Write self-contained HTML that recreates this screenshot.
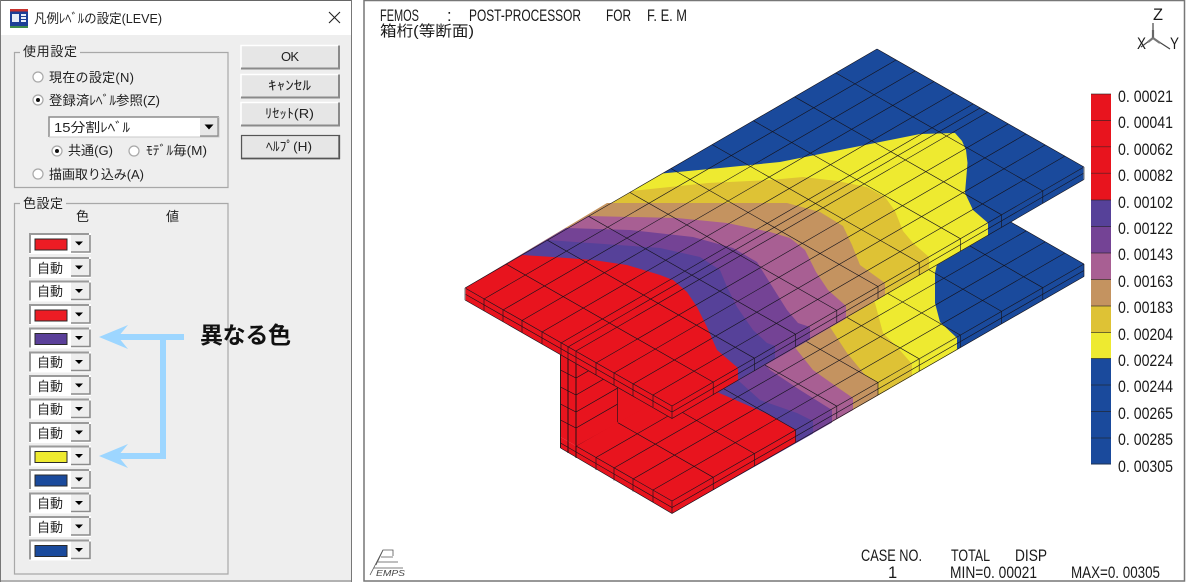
<!DOCTYPE html>
<html><head><meta charset="utf-8"><title>凡例レベルの設定</title>
<style>
html,body{margin:0;padding:0;background:#fff;width:1186px;height:582px;overflow:hidden}
svg{display:block}
text{font-family:"Liberation Sans","Noto Sans CJK JP",sans-serif;fill:#222}
.d text{font-size:13px}
.m text{font-size:16.5px;fill:#1a1a1a}
.g path{fill:none;stroke:#15131c;stroke-width:.62}
</style></head><body>
<svg width="1186" height="582" viewBox="0 0 1186 582" xmlns="http://www.w3.org/2000/svg">
<defs>
<g id="btn"><rect x="0" y="0" width="98" height="23" fill="#e6e6e6"/><path d="M0 23V0H98" fill="none" stroke="#fff" stroke-width="1.5"/><path d="M0 23H98V0" fill="none" stroke="#8a8a8a" stroke-width="2"/></g>
<g id="row"><rect x="0" y="0" width="62" height="21" fill="#fff"/><path d="M1 20V1H60" fill="none" stroke="#9a9a9a" stroke-width="2"/><rect x="42" y="2" width="19" height="17" fill="#eeeeee"/><path d="M42 19H61V2" fill="none" stroke="#8c8c8c" stroke-width="1.6"/><path d="M46 8.5H54L50 12.5Z" fill="#000"/></g>
<g id="rad"><circle r="5" fill="#fff" stroke="#a8a8a8" stroke-width="1.2"/></g>
</defs>

<!-- Dialog -->
<rect x="0" y="0" width="352" height="582" fill="#eeeeee"/>
<rect x="1" y="1" width="350" height="34" fill="#fff"/>
<path d="M0 .5H352" stroke="#666" stroke-width="1"/>
<path d="M351.500 0V582M0 581H352M.5 0V582" stroke="#777" stroke-width="1" fill="none"/>
<g>
<rect x="10" y="9" width="18" height="18" fill="#1c3f96"/>
<rect x="10" y="9" width="18" height="2.500" fill="#c8322e"/>
<rect x="10" y="26" width="18" height="2" fill="#3d8a4a"/>
<rect x="12" y="14" width="7" height="8" fill="#e8eef8"/><rect x="21" y="14" width="5" height="2" fill="#e8eef8"/><rect x="21" y="17" width="5" height="2" fill="#e8eef8"/><rect x="21" y="20" width="5" height="2" fill="#e8eef8"/>
</g>
<g class="d">
<text x="34" y="23" textLength="128" lengthAdjust="spacingAndGlyphs">凡例ﾚﾍﾞﾙの設定(LEVE)</text>
<path d="M329 12L340 23M340 12L329 23" stroke="#222" stroke-width="1.1" fill="none"/>

<!-- group 1 -->
<path d="M20 52.500H14.500V187.500H228V52.500H80" fill="none" stroke="#a8a8a8" stroke-width="1.200"/>
<text x="23" y="56" textLength="54">使用設定</text>
<use href="#rad" x="38" y="77"/><text x="49" y="82" textLength="85">現在の設定(N)</text>
<use href="#rad" x="38" y="100"/><circle cx="38" cy="100" r="2" fill="#111"/><text x="49" y="105" textLength="111" lengthAdjust="spacingAndGlyphs">登録済ﾚﾍﾞﾙ参照(Z)</text>
<rect x="49" y="117" width="170" height="20" fill="#fff"/>
<path d="M49 137V117H219" fill="none" stroke="#8c8c8c" stroke-width="1.500"/>
<path d="M219 117V137H49" fill="none" stroke="#c9c9c9"/>
<rect x="200" y="118" width="18" height="18" fill="#e8e8e8"/><path d="M200 136H218V118" fill="none" stroke="#888" stroke-width="1.2"/>
<path d="M204.500 124.500H213.500L209 129.500Z" fill="#000"/>
<text x="54" y="132" textLength="76" lengthAdjust="spacingAndGlyphs">15分割ﾚﾍﾞﾙ</text>
<use href="#rad" x="57" y="151"/><circle cx="57" cy="151" r="2" fill="#111"/><text x="68" y="155" textLength="45">共通(G)</text>
<use href="#rad" x="134" y="151"/><text x="146" y="155" textLength="61" lengthAdjust="spacingAndGlyphs">ﾓﾃﾞﾙ毎(M)</text>
<use href="#rad" x="38" y="174"/><text x="49" y="179" textLength="95">描画取り込み(A)</text>

<!-- buttons -->
<use href="#btn" x="241" y="45.500"/><text x="281" y="61" textLength="18">OK</text>
<use href="#btn" x="241" y="74.500"/><text x="268" y="90" textLength="43" lengthAdjust="spacingAndGlyphs">ｷｬﾝｾﾙ</text>
<use href="#btn" x="241" y="102.500"/><text x="265" y="118" textLength="49" lengthAdjust="spacingAndGlyphs">ﾘｾｯﾄ(R)</text>
<use href="#btn" x="241" y="135.500"/><path d="M241.500 158.500V135.500H339.500V158.500Z" fill="none" stroke="#555" stroke-width="1.300"/><text x="266" y="151" textLength="46" lengthAdjust="spacingAndGlyphs">ﾍﾙﾌﾟ(H)</text>

<!-- group 2 -->
<path d="M20 203.500H14.500V574H228V203.500H66" fill="none" stroke="#a8a8a8" stroke-width="1.200"/>
<text x="23" y="208" textLength="40">色設定</text>
<text x="76" y="221">色</text>
<text x="166" y="221">値</text>

<use href="#row" x="29" y="233"/><rect x="35" y="239" width="32" height="11" fill="#ec1c24" stroke="#2a2a2a"/>
<use href="#row" x="29" y="257"/><text x="37" y="273" textLength="26">自動</text>
<use href="#row" x="29" y="280.500"/><text x="37" y="296" textLength="26">自動</text>
<use href="#row" x="29" y="304"/><rect x="35" y="310" width="32" height="11" fill="#ec1c24" stroke="#2a2a2a"/>
<use href="#row" x="29" y="327.500"/><rect x="35" y="333.500" width="32" height="11" fill="#5a3f99" stroke="#2a2a2a"/>
<use href="#row" x="29" y="351.500"/><text x="37" y="367" textLength="26">自動</text>
<use href="#row" x="29" y="375"/><text x="37" y="391" textLength="26">自動</text>
<use href="#row" x="29" y="398.500"/><text x="37" y="414" textLength="26">自動</text>
<use href="#row" x="29" y="422"/><text x="37" y="438" textLength="26">自動</text>
<use href="#row" x="29" y="445.500"/><rect x="35" y="451.500" width="32" height="11" fill="#eeea30" stroke="#2a2a2a"/>
<use href="#row" x="29" y="469"/><rect x="35" y="475" width="32" height="11" fill="#1a4a9c" stroke="#2a2a2a"/>
<use href="#row" x="29" y="492.500"/><text x="37" y="508" textLength="26">自動</text>
<use href="#row" x="29" y="516"/><text x="37" y="532" textLength="26">自動</text>
<use href="#row" x="29" y="539.500"/><rect x="35" y="545.500" width="32" height="11" fill="#1a4a9c" stroke="#2a2a2a"/>
</g>

<!-- arrows -->
<g fill="#9dd6ff">
<rect x="115" y="334" width="69" height="6"/>
<rect x="160" y="334" width="6" height="125"/>
<rect x="115" y="453" width="51" height="6"/>
<path d="M99 337L128 325L118 337L128 349Z"/>
<path d="M99 456L128 444L118 456L128 468Z"/>
</g>
<text x="200" y="343" style="font-size:23px;font-weight:700;fill:#111" textLength="91">異なる色</text>

<!-- Right panel -->
<rect x="363" y="0" width="821" height="581" fill="#fff"/>
<path d="M364 581V.5H1184.500V581Z" fill="none" stroke="#777" stroke-width="1.500"/>
<g class="m">
<text x="380" y="21" textLength="39" lengthAdjust="spacingAndGlyphs">FEMOS</text>
<text x="447" y="21">:</text>
<text x="469" y="21" textLength="112" lengthAdjust="spacingAndGlyphs">POST-PROCESSOR</text>
<text x="606" y="21" textLength="25" lengthAdjust="spacingAndGlyphs">FOR</text>
<text x="647" y="21" textLength="40" lengthAdjust="spacingAndGlyphs">F. E. M</text>
<text x="380" y="36" textLength="94" lengthAdjust="spacingAndGlyphs" style="font-size:15px">箱桁(等断面)</text>

<text x="1153" y="20" textLength="10" lengthAdjust="spacingAndGlyphs">Z</text>
<text x="1137" y="49" textLength="9" lengthAdjust="spacingAndGlyphs">X</text>
<text x="1170" y="49" textLength="9" lengthAdjust="spacingAndGlyphs">Y</text>

<text x="1118" y="102" textLength="55" lengthAdjust="spacingAndGlyphs">0. 00021</text>
<text x="1118" y="128" textLength="55" lengthAdjust="spacingAndGlyphs">0. 00041</text>
<text x="1118" y="155" textLength="55" lengthAdjust="spacingAndGlyphs">0. 00062</text>
<text x="1118" y="181" textLength="55" lengthAdjust="spacingAndGlyphs">0. 00082</text>
<text x="1118" y="208" textLength="55" lengthAdjust="spacingAndGlyphs">0. 00102</text>
<text x="1118" y="234" textLength="55" lengthAdjust="spacingAndGlyphs">0. 00122</text>
<text x="1118" y="260" textLength="55" lengthAdjust="spacingAndGlyphs">0. 00143</text>
<text x="1118" y="287" textLength="55" lengthAdjust="spacingAndGlyphs">0. 00163</text>
<text x="1118" y="313" textLength="55" lengthAdjust="spacingAndGlyphs">0. 00183</text>
<text x="1118" y="340" textLength="55" lengthAdjust="spacingAndGlyphs">0. 00204</text>
<text x="1118" y="366" textLength="55" lengthAdjust="spacingAndGlyphs">0. 00224</text>
<text x="1118" y="392" textLength="55" lengthAdjust="spacingAndGlyphs">0. 00244</text>
<text x="1118" y="419" textLength="55" lengthAdjust="spacingAndGlyphs">0. 00265</text>
<text x="1118" y="445" textLength="55" lengthAdjust="spacingAndGlyphs">0. 00285</text>
<text x="1118" y="472" textLength="55" lengthAdjust="spacingAndGlyphs">0. 00305</text>

<text x="861" y="561" textLength="61" lengthAdjust="spacingAndGlyphs">CASE NO.</text>
<text x="951" y="561" textLength="39" lengthAdjust="spacingAndGlyphs">TOTAL</text>
<text x="1015" y="561" textLength="32" lengthAdjust="spacingAndGlyphs">DISP</text>
<text x="888" y="578">1</text>
<text x="950" y="578" textLength="87" lengthAdjust="spacingAndGlyphs">MIN=0. 00021</text>
<text x="1071" y="578" textLength="89" lengthAdjust="spacingAndGlyphs">MAX=0. 00305</text>
</g>

<!-- axis -->
<path d="M1153 23V38" stroke="#444" stroke-width="1.200"/><path d="M1153 30V38" stroke="#666" stroke-width="2.200"/>
<path d="M1153 38L1141 47M1153 38L1170 49" stroke="#444" stroke-width="1.200"/>
<path d="M1153 38L1148 42M1153 38L1160 43" stroke="#777" stroke-width="2.200"/>

<!-- logo -->
<g fill="none" stroke="#555" stroke-width=".8">
<path d="M370 575L383 550H393V556M381 557H393M378 562H398M374 568H403"/>
<path d="M383 550L376 565"/>
</g>
<text x="376" y="576" style="font-size:8px;font-style:italic;fill:#444" textLength="29" lengthAdjust="spacingAndGlyphs">EMPS</text>

<!-- legend -->
<rect x="1091" y="94" width="20" height="106" fill="#e8141e"/>
<rect x="1091" y="200" width="20" height="26.500" fill="#564199"/>
<rect x="1091" y="226.500" width="20" height="26.500" fill="#744395"/>
<rect x="1091" y="253" width="20" height="26.500" fill="#a85f93"/>
<rect x="1091" y="279.500" width="20" height="26.500" fill="#c49360"/>
<rect x="1091" y="306" width="20" height="26.500" fill="#dec235"/>
<rect x="1091" y="332.500" width="20" height="26" fill="#eeea30"/>
<rect x="1091" y="358.500" width="20" height="106" fill="#1a4a9c"/>
<path d="M1091 94H1111M1091 120.400H1111M1091 146.800H1111M1091 173.200H1111M1091 200H1111M1091 226.500H1111M1091 253H1111M1091 279.500H1111M1091 306H1111M1091 332.500H1111M1091 358.500H1111M1091 385H1111M1091 411.500H1111M1091 438H1111M1091 464H1111" stroke="#222" stroke-width=".7" opacity=".8"/>

<!-- LOWER FLANGE: top -->
<path d="M576 446L988 209L1084 264L672 501Z" fill="#1a4a9c"/>
<path d="M560.500 437L576 446L672 501V513.500L560.500 448Z" fill="#e8141e"/>
<path d="M672 501L1084 264V276.500L672 513.500Z" fill="#1a4a9c"/>
<path d="M920 248L937 264L935 273L935 303L940 322L957 338L672 501L576 446Z" fill="#eeea30"/>
<path d="M957 338V350L672 513.500V501Z" fill="#eeea30"/>
<path d="M860 283L875 303L883 333L898 348L912 364L672 501L576 446Z" fill="#dec235"/>
<path d="M912 364V376L672 513.500V501Z" fill="#dec235"/>
<path d="M810 312L830 327L847 353L865 375L878 383L672 501L576 446Z" fill="#c49360"/>
<path d="M878 383V395.500L672 513.500V501Z" fill="#c49360"/>
<path d="M780 330L797 350L813 370L837 387L853 398L672 501L576 446Z" fill="#a85f93"/>
<path d="M853 398V410L672 513.500V501Z" fill="#a85f93"/>
<path d="M750 347L770 370L800 390L832 410L672 501L576 446Z" fill="#744395"/>
<path d="M832 410V422.500L672 513.500V501Z" fill="#744395"/>
<path d="M720 364L740 382L760 400L797 413L813 421L672 501L576 446Z" fill="#564199"/>
<path d="M813 421V433.500L672 513.500V501Z" fill="#564199"/>
<path d="M700 376L717 392L770 415L796 430L672 501L576 446Z" fill="#e8141e"/>
<path d="M796 430V442.500L672 513.500V501Z" fill="#e8141e"/>

<g class="g">
<!-- lower v-lines -->
<path d="M576 446L672 501M617.200 422.300L713.200 477.300M658.400 398.600L754.400 453.600M699.600 374.900L795.600 429.900M740.800 351.200L836.800 406.200M782 327.500L878 382.500M823.200 303.800L919.200 358.800M864.400 280.100L960.400 335.100M905.600 256.400L1001.600 311.400M946.800 232.700L1042.800 287.700M988 209L1084 264"/>
<!-- lower u-lines -->
<path d="M576 446L988 209M596 457.500L1008 220.500M614 468L1026 231M633 479L1045 242M653 490L1065 253M672 501L1084 264"/>
<!-- lower side -->
<path d="M560.500 443L672 507.500L1084 270.500M560.500 448L672 513.500L1084 276.500M1084 264V276.500"/>
<path d="M596 457.500V470M614 468V480.500M633 479V491.500M653 490V502.500M672 501V513.500M713.200 477.300V489.800M754.400 453.600V466.100M795.600 429.900V442.400M836.800 406.200V418.700M878 382.500V395M919.200 358.800V371.300M960.400 335.100V347.600M1001.600 311.400V323.900M1042.800 287.700V300.200"/>
</g>

<!-- WEB -->
<path d="M560.500 354L576 363L672 418L650 405L576 446L560.500 437Z" fill="#e8141e"/>
<path d="M576 363L650 405L576 446Z" fill="#e8141e"/>
<g class="g">
<path d="M560.500 370L576 378L617.200 354.300M560.500 387L576 395L617.200 371.300M560.500 404L576 412L617.200 388.300M560.500 420L576 428L617.200 404.300"/>
<path d="M617.500 386V422.300"/>
<path d="M560.500 354V448M568 358V453M576 363V458" style="stroke-width:.9;stroke:#111"/>
</g>

<!-- TOP FLANGE: top face -->
<path d="M465 288L877 49L1084 167L672 406Z" fill="#1a4a9c"/>
<path d="M465 288L672 406V418.500L465 300Z" fill="#e8141e"/>
<path d="M672 406L1084 167V179.500L672 418.500Z" fill="#1a4a9c"/>
<path d="M662 173.500L720 168L780 162L870 144L920 134L955 133L962 141L966 150L967.500 163L965 193L973 210L988 223L672 406L465 288Z" fill="#eeea30"/>
<path d="M988 223V235.500L672 418.500V406Z" fill="#eeea30"/>
<path d="M632 191L708 183L770 180L803 177L837 181L867 187L885 197L895 211L903 231L913 243L929 257L672 406L465 288Z" fill="#dec235"/>
<path d="M929 257V269.500L672 418.500V406Z" fill="#dec235"/>
<path d="M607 203L660 203L727 203L787 203L820 212L843 226L852 245L860 265L885 283L672 406L465 288Z" fill="#c49360"/>
<path d="M885 283V295.500L672 418.500V406Z" fill="#c49360"/>
<path d="M588 216L677 218L727 223L770 232L790 238L805 250L816 272L828 290L846 306L672 406L465 288Z" fill="#a85f93"/>
<path d="M846 306V318.500L672 418.500V406Z" fill="#a85f93"/>
<path d="M566 228L630 230L693 237L733 248L757 262L770 283L787 310L798 323L810 327L672 406L465 288Z" fill="#744395"/>
<path d="M810 327V339.500L672 418.500V406Z" fill="#744395"/>
<path d="M547 240L660 248L700 257L720 270L727 287L737 307L753 330L767 343L775 346L672 406L465 288Z" fill="#564199"/>
<path d="M775 346V358.500L672 418.500V406Z" fill="#564199"/>
<path d="M522 255L553 257L593 260L627 265L660 275L673 280L687 292L697 307L707 327L717 350L738 368L672 406L465 288Z" fill="#e8141e"/>
<path d="M738 368V380.500L672 418.500V406Z" fill="#e8141e"/>

<g class="g">
<!-- v-lines -->
<path d="M465 288L672 406M506.200 264.100L713.200 382.100M547.400 240.200L754.400 358.200M588.600 216.300L795.600 334.300M629.800 192.400L836.800 310.400M671 168.500L878 286.500M712.200 144.600L919.200 262.600M753.400 120.700L960.400 238.700M794.600 96.800L1001.600 214.800M835.800 72.900L1042.800 190.900M877 49L1084 167"/>
<!-- u-lines -->
<path d="M465 288L877 49M484 299L896 60M503 310L915 71M522 320.500L934 81.500M542 332L954 93M561 343L973 104M568 347L980 108M576 351L988 112M596 363L1008 124M614 373L1026 134M633 384L1045 145M653 395L1065 156M672 406L1084 167"/>
<!-- sides -->
<path d="M465 294L672 412L1084 173M465 300L672 418.500L1084 179.500"/>
<path d="M465 288V300M1084 167V179.500" style="stroke:#888;stroke-width:1.200"/>
<path d="M484 299V311M503 310V322M522 320.500V332.500M542 332V344M561 343V355M568 347V359M576 351V363M596 363V375M614 373V385M633 384V396M653 395V407M672 406V418.500M713.200 382.100V394.600M754.400 358.200V370.700M795.600 334.300V346.800M836.800 310.400V322.900M878 286.500V299M919.200 262.600V275.100M960.400 238.700V251.200M1001.600 214.800V227.300M1042.800 190.900V203.400"/>
</g>
</svg>
</body></html>
